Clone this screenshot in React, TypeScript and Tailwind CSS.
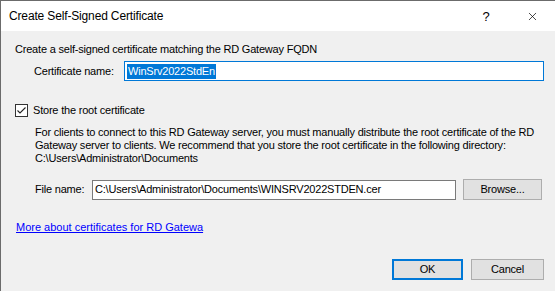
import { X } from "lucide-react";

const sans = "font-['Liberation_Sans',Arial,sans-serif]";

export default function App() {
  return (
    <div className={`flex h-[291px] w-[555px] flex-col overflow-hidden border-l border-t border-[#6b6b6b] bg-[#f0f0f0] text-[11px] leading-[13px] text-black ${sans}`}>
      {/* Barra de título */}
      <div className="flex h-[30px] shrink-0 items-center bg-white pl-[8px]">
        <span className="flex-1 text-[12px] tracking-[-0.15px]">Create Self-Signed Certificate</span>
        <span className="w-[46px] text-center text-[13px]">?</span>
        <span className="flex w-[46px] items-center justify-center">
          <X className="h-[13px] w-[13px]" strokeWidth={1.3} />
        </span>
      </div>

      <div className="flex flex-1 flex-col whitespace-nowrap pl-[14px] pr-[11px] tracking-[-0.2px]">
        <p className="mt-[12px]">Create a self-signed certificate matching the RD Gateway FQDN</p>

        <div className="mt-[5px] flex items-center">
          <span className="w-[109px] pl-[19px]">Certificate name:</span>
          <div className="flex h-[20px] flex-1 items-center border border-[#0078d7] bg-white pl-[2px]">
            <span className="bg-[#0078d7] px-px leading-[15px] text-white">WinSrv2022StdEn</span>
          </div>
        </div>

        <label className="mt-[23px] flex items-center">
          <span className="flex h-[13px] w-[13px] items-center justify-center border border-[#333] bg-white">
            <svg viewBox="0 0 11 11" className="h-[11px] w-[11px]">
              <path d="M1.5 5.5 L4 8 L9.5 2.5" fill="none" stroke="#222" strokeWidth="1.1" />
            </svg>
          </span>
          <span className="ml-[5px]">Store the root certificate</span>
        </label>

        <p className="mt-[9px] pl-[20px]">
          For clients to connect to this RD Gateway server, you must manually distribute the root certificate of the RD
          <br />
          Gateway server to clients. We recommend that you store the root certificate in the following directory:
          <br />
          C:\Users\Administrator\Documents
        </p>

        <div className="mt-[14px] flex items-center">
          <span className="w-[77px] pl-[20px]">File name:</span>
          <div className="flex h-[20px] w-[364px] items-center border border-[#7a7a7a] bg-white pl-[2px]">
            C:\Users\Administrator\Documents\WINSRV2022STDEN.cer
          </div>
          <button className="ml-[7px] h-[21px] w-[79px] border border-[#adadad] bg-[#e1e1e1]">Browse...</button>
        </div>

        <a className="mt-[21px] self-start pl-px tracking-normal text-[#0000ff] underline">More about certificates for RD Gatewa</a>

        <div className="mt-auto mb-[11px] flex justify-end gap-[8px]">
          <button className="h-[21px] w-[71px] border-2 border-[#0078d7] bg-[#e1e1e1]">OK</button>
          <button className="h-[21px] w-[73px] border border-[#adadad] bg-[#e1e1e1]">Cancel</button>
        </div>
      </div>
    </div>
  );
}
